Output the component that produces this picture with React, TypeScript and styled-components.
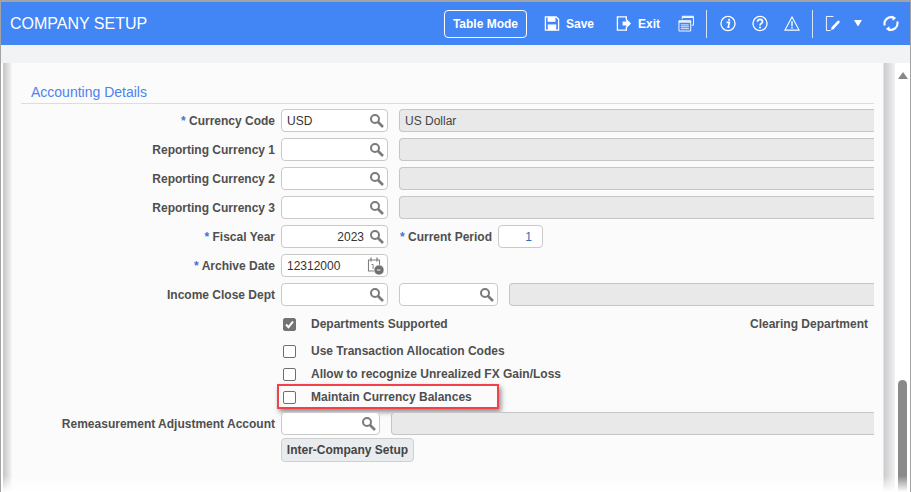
import React from "react";
import styled, { createGlobalStyle } from "styled-components";

const GlobalStyle = createGlobalStyle`
  html, body {
    margin: 0;
    padding: 0;
    background: #fff;
    overflow: hidden;
  }
  * { box-sizing: border-box; }
`;

const Page = styled.div`
  position: relative;
  width: 911px;
  height: 492px;
  display: flex;
  flex-direction: column;
  overflow: hidden;
  font-family: "Liberation Sans", Arial, sans-serif;
  border-top: 2px solid #a3a3a3;
  border-left: 1px solid #a3a3a3;
  border-right: 1px solid #a3a3a3;
  background: #fff;
`;

const Header = styled.header`
  flex: none;
  height: 43px;
  background: #4285f4;
  display: flex;
  align-items: center;
  padding-left: 9px;
  color: #fff;
`;

const Title = styled.h1`
  margin: 0;
  font-size: 16px;
  font-weight: 400;
  color: #fff;
`;

const Toolbar = styled.div`
  margin-left: auto;
  display: flex;
  align-items: center;
  height: 100%;
  padding-right: 11px;
`;

const ModeButton = styled.button`
  width: 83px;
  height: 28px;
  margin-right: 17px;
  padding: 0;
  background: transparent;
  border: 1px solid #fff;
  border-radius: 4px;
  color: #fff;
  font: 700 12px "Liberation Sans", Arial, sans-serif;
`;

const ToolAction = styled.div<{ $gap: number }>`
  display: flex;
  align-items: center;
  gap: 6px;
  margin-right: ${({ $gap }) => $gap}px;
  font-size: 12px;
  font-weight: 700;
`;

const ToolIcon = styled.svg<{ $gap?: number }>`
  flex: none;
  width: 16px;
  height: 17px;
  margin-right: ${({ $gap }) => $gap ?? 0}px;
  fill: none;
  stroke: #fff;
  stroke-width: 1.4;
`;

const Caret = styled.svg`
  flex: none;
  width: 10px;
  height: 7px;
  margin-right: 20px;
  fill: #fff;
`;

const Divider = styled.span<{ $gap: number }>`
  flex: none;
  width: 1px;
  height: 28px;
  background: #d5e3fb;
  margin-right: ${({ $gap }) => $gap}px;
`;

const Strip = styled.div`
  flex: none;
  height: 18px;
  background: #f2f3f5;
`;

const Body = styled.div`
  flex: 1;
  display: flex;
  min-height: 0;
`;

const Panel = styled.main`
  flex: none;
  width: 892px;
  margin-left: 2px;
  padding: 21px 21px 0 18px;
  background: linear-gradient(
    to right,
    #c4c4c4 0,
    #efefef 8px,
    #fbfbfb 9px,
    #fbfbfb 880px,
    #cccccc 881px,
    #f0f1f3 892px
  );
`;

const SectionTitle = styled.h2`
  margin: 0;
  padding: 0 0 3px 10px;
  height: 20px;
  font-size: 14px;
  line-height: 16px;
  font-weight: 400;
  color: #4d82f0;
  border-bottom: 1px solid #d6deea;
`;

const Form = styled.div`
  padding-top: 5px;
  display: flex;
  flex-direction: column;
`;

const Row = styled.div<{ $height?: number; $mt?: number }>`
  position: relative;
  display: flex;
  align-items: center;
  height: ${({ $height }) => $height ?? 23}px;
  margin-top: ${({ $mt }) => $mt ?? 6}px;
`;

const Label = styled.label<{ $width?: number }>`
  flex: none;
  width: ${({ $width }) => $width ?? 254}px;
  margin-right: 6px;
  padding-top: 1px;
  text-align: right;
  font-size: 12px;
  font-weight: 700;
  color: #4f4f4f;
  white-space: nowrap;
`;

const Star = styled.span`
  color: #3f74d8;
`;

const Input = styled.div<{ $width: number; $right?: boolean; $mr?: number }>`
  flex: none;
  display: flex;
  align-items: center;
  justify-content: ${({ $right }) => ($right ? "flex-end" : "flex-start")};
  width: ${({ $width }) => $width}px;
  height: 100%;
  margin-right: ${({ $mr }) => $mr ?? 11}px;
  padding: 0 3px 0 5px;
  background: #fff;
  border: 1px solid #c9c9c9;
  border-radius: 4px;
  font-size: 12px;
  color: #333;
`;

const InputValue = styled.span`
  flex: 1;
  padding-top: 1px;
`;

const RightValue = styled(InputValue)`
  text-align: right;
  padding-right: 5px;
`;

const PeriodValue = styled.span`
  padding-top: 1px;
  padding-right: 7px;
  color: #2d6fb8;
`;

const Lookup = styled.svg`
  flex: none;
  width: 15px;
  height: 15px;
  margin-left: auto;
  fill: none;
  stroke: #7b7b7b;
  stroke-width: 2;
`;

const Calendar = styled.svg`
  flex: none;
  width: 18px;
  height: 20px;
  margin-left: auto;
  margin-right: -1px;
`;

const ReadOnly = styled.div`
  flex: 1;
  height: 100%;
  display: flex;
  align-items: center;
  padding-left: 5px;
  background: #e9e9e9;
  border-top: 1px solid #c6c6c6;
  border-bottom: 1px solid #c6c6c6;
  border-left: 1px solid #c6c6c6;
  border-radius: 4px 0 0 4px;
  font-size: 12px;
  color: #444;
`;

const Spacer = styled.div<{ $width: number }>`
  flex: none;
  width: ${({ $width }) => $width}px;
`;

const CheckBox = styled.span<{ $checked?: boolean }>`
  flex: none;
  display: flex;
  align-items: center;
  justify-content: center;
  width: 13px;
  height: 13px;
  margin-left: 2px;
  margin-right: 15px;
  background: ${({ $checked }) => ($checked ? "#737373" : "#fff")};
  border: 1px solid ${({ $checked }) => ($checked ? "#737373" : "#6f6f6f")};
  border-radius: 2px;
`;

const CheckText = styled.span`
  font-size: 12px;
  font-weight: 700;
  color: #4f4f4f;
  white-space: nowrap;
`;

const ClearingLabel = styled(CheckText)`
  margin-left: auto;
  margin-right: 6px;
`;

const Highlight = styled.div`
  position: absolute;
  left: 256px;
  top: -6px;
  width: 222px;
  height: 25px;
  border: 2px solid #f2414b;
  box-shadow: 2px 3px 5px rgba(0, 0, 0, 0.45);
  pointer-events: none;
`;

const SetupButton = styled.button`
  width: 133px;
  height: 24px;
  padding: 0;
  background: #e9ecef;
  border: 1px solid #cfcfcf;
  border-radius: 4px;
  font: 700 12px "Liberation Sans", Arial, sans-serif;
  color: #444;
`;

const ScrollTrack = styled.aside`
  flex: 1;
  display: flex;
  flex-direction: column;
  justify-content: space-between;
  align-items: center;
  padding: 9px 0 0;
`;

const ScrollArrow = styled.span`
  width: 0;
  height: 0;
  border-left: 5px solid transparent;
  border-right: 5px solid transparent;
  border-bottom: 7px solid #888;
`;

const ScrollThumb = styled.span`
  width: 9px;
  height: 112px;
  background: #8a8a8a;
  border-radius: 5px 5px 0 0;
`;

const BottomFade = styled.div`
  position: absolute;
  left: 0;
  right: 0;
  bottom: 0;
  height: 16px;
  background: linear-gradient(to bottom, rgba(255, 255, 255, 0), #fff);
  pointer-events: none;
`;

function SearchIcon() {
  return (
    <Lookup viewBox="0 0 15 15">
      <circle cx="6" cy="6" r="4" />
      <path d="M9 9l5 5" strokeWidth="2.6" />
    </Lookup>
  );
}

function CalendarIcon() {
  return (
    <Calendar viewBox="0 0 18 20">
      <path d="M1.5 4h11v11h-11z" fill="none" stroke="#808080" strokeWidth="1.1" />
      <path d="M4 1.5v4M10 1.5v4" stroke="#808080" strokeWidth="1.3" />
      <path d="M4.5 8.5h1.6v4.5" fill="none" stroke="#808080" />
      <circle cx="12" cy="14" r="5" fill="#6f6f6f" stroke="#fbfbfb" strokeWidth="0.6" />
      <path d="M10 14h3.4" stroke="#fff" />
    </Calendar>
  );
}

export default function App() {
  return (
    <Page>
      <GlobalStyle />
      <Header>
        <Title>COMPANY SETUP</Title>
        <Toolbar>
          <ModeButton>Table Mode</ModeButton>
          <ToolAction $gap={22}>
            <ToolIcon viewBox="0 0 17 17">
              <path d="M1.5 1.5h11.5l2.5 2.5v11.5h-14z" />
              <path d="M4.5 1.5v4.5h7v-4.5" fill="#fff" />
              <path d="M4 9.5h9v6H4z" fill="#fff" stroke="none" />
            </ToolIcon>
            Save
          </ToolAction>
          <ToolAction $gap={18}>
            <ToolIcon viewBox="0 0 17 17">
              <path d="M11 5V1.5H1.5v14H11V12" />
              <path d="M7 6.5h4V3.5l5 5-5 5v-3H7z" fill="#fff" stroke="none" />
            </ToolIcon>
            Exit
          </ToolAction>
          <ToolIcon viewBox="0 0 17 17" $gap={12}>
            <path d="M4.5 4V.8h12v9.5h-2" strokeWidth="1" />
            <path d="M5 1h11v1.6H5z" fill="#fff" stroke="none" />
            <path d="M1 5.5h12.5v11H1z" fill="#4285f4" strokeWidth="1" />
            <path d="M1 6h12.5v1.6H1z" fill="#fff" stroke="none" />
            <path d="M3 10h8.5M3 12h8.5M3 14h8.5" strokeWidth="0.9" />
          </ToolIcon>
          <Divider $gap={13} />
          <ToolIcon viewBox="0 0 17 17" $gap={16}>
            <circle cx="8.5" cy="8.5" r="7.5" />
            <circle cx="9.6" cy="4.6" r="1.2" fill="#fff" stroke="none" />
            <path d="M7 7.3h3l-1.3 5.2h1.4" strokeWidth="1.7" />
          </ToolIcon>
          <ToolIcon viewBox="0 0 17 17" $gap={16}>
            <circle cx="8.5" cy="8.5" r="7.5" />
            <path d="M5.8 6.6c0-3.4 5.4-3.4 5.4 0 0 2-2.7 1.9-2.7 3.9" strokeWidth="1.8" />
            <circle cx="8.5" cy="12.8" r="1.1" fill="#fff" stroke="none" />
          </ToolIcon>
          <ToolIcon viewBox="0 0 17 17" $gap={12}>
            <path d="M8.5 1.5L16 15.5H1z" strokeWidth="1.2" />
            <path d="M8.5 6v5.5M8.5 12.3v1.5" strokeWidth="1.5" />
          </ToolIcon>
          <Divider $gap={12} />
          <ToolIcon viewBox="0 0 17 17" $gap={12}>
            <path d="M9 1H1.5v15H6" strokeWidth="1" />
            <path d="M6.5 15.5l.5-3L14 5l2 2-7 7.5z" fill="#fff" stroke="none" />
          </ToolIcon>
          <Caret viewBox="0 0 10 7">
            <path d="M1 0h8L5 6.5z" />
          </Caret>
          <ToolIcon viewBox="0 0 17 17">
            <path d="M1.8 10.5A7 7 0 0 1 11 2.2" strokeWidth="2.2" />
            <path d="M15.2 6.5A7 7 0 0 1 6 14.8" strokeWidth="2.2" />
            <path d="M9.5 0l4.5 2.6-3.6 3zM7.5 17L3 14.4l3.6-3z" fill="#fff" stroke="none" />
          </ToolIcon>
        </Toolbar>
      </Header>
      <Strip />
      <Body>
        <Panel>
          <SectionTitle>Accounting Details</SectionTitle>
          <Form>
            <Row $mt={0}>
              <Label><Star>* </Star>Currency Code</Label>
              <Input $width={107}>
                <InputValue>USD</InputValue>
                <SearchIcon />
              </Input>
              <ReadOnly>US Dollar</ReadOnly>
            </Row>
            <Row>
              <Label>Reporting Currency 1</Label>
              <Input $width={107}><SearchIcon /></Input>
              <ReadOnly />
            </Row>
            <Row>
              <Label>Reporting Currency 2</Label>
              <Input $width={107}><SearchIcon /></Input>
              <ReadOnly />
            </Row>
            <Row>
              <Label>Reporting Currency 3</Label>
              <Input $width={107}><SearchIcon /></Input>
              <ReadOnly />
            </Row>
            <Row>
              <Label><Star>* </Star>Fiscal Year</Label>
              <Input $width={107} $mr={10}>
                <RightValue>2023</RightValue>
                <SearchIcon />
              </Input>
              <Label $width={94}><Star>* </Star>Current Period</Label>
              <Input $width={45} $right>
                <PeriodValue>1</PeriodValue>
              </Input>
            </Row>
            <Row>
              <Label><Star>* </Star>Archive Date</Label>
              <Input $width={107}>
                <InputValue>12312000</InputValue>
                <CalendarIcon />
              </Input>
            </Row>
            <Row>
              <Label>Income Close Dept</Label>
              <Input $width={107}><SearchIcon /></Input>
              <Input $width={99}><SearchIcon /></Input>
              <ReadOnly />
            </Row>
            <Row $height={14} $mt={11}>
              <Spacer $width={260} />
              <CheckBox $checked>
                <svg width="11" height="11" viewBox="0 0 11 11">
                  <path d="M2 5.5l2.5 2.7L9 2.5" fill="none" stroke="#fff" strokeWidth="2" />
                </svg>
              </CheckBox>
              <CheckText>Departments Supported</CheckText>
              <ClearingLabel>Clearing Department</ClearingLabel>
            </Row>
            <Row $height={14} $mt={13}>
              <Spacer $width={260} />
              <CheckBox />
              <CheckText>Use Transaction Allocation Codes</CheckText>
            </Row>
            <Row $height={14} $mt={9}>
              <Spacer $width={260} />
              <CheckBox />
              <CheckText>Allow to recognize Unrealized FX Gain/Loss</CheckText>
            </Row>
            <Row $height={14} $mt={9}>
              <Spacer $width={260} />
              <CheckBox />
              <CheckText>Maintain Currency Balances</CheckText>
              <Highlight />
            </Row>
            <Row $mt={8}>
              <Label>Remeasurement Adjustment Account</Label>
              <Input $width={99}><SearchIcon /></Input>
              <ReadOnly />
            </Row>
            <Row $height={24} $mt={3}>
              <Spacer $width={260} />
              <SetupButton>Inter-Company Setup</SetupButton>
            </Row>
          </Form>
        </Panel>
        <ScrollTrack>
          <ScrollArrow />
          <ScrollThumb />
        </ScrollTrack>
      </Body>
      <BottomFade />
    </Page>
  );
}
